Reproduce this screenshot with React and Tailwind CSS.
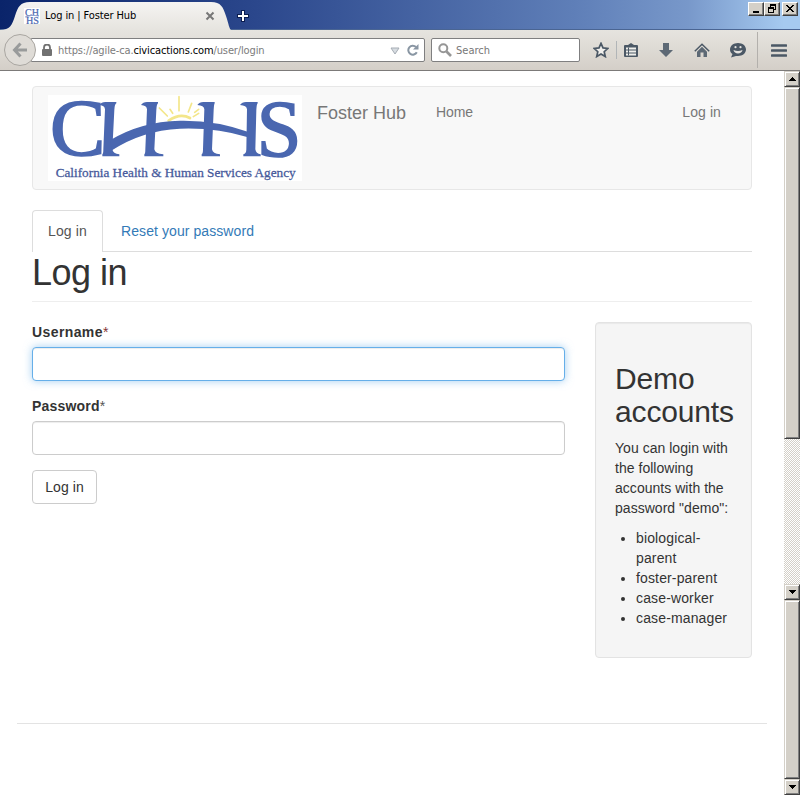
import React from "react";

const TAHOMA = "font-['DejaVu_Sans_Condensed','DejaVu_Sans',sans-serif]";

function Logo() {
  const pillars = [
    [208, 259, 239, 233, 217, 268],
    [333, 384, 365, 359, 343, 400],
    [502, 554, 537, 532, 515, 570],
    [630, 683, 665, 662, 640, 692],
  ];
  return (
    <svg width="254" height="86" viewBox="54 45 762 258" className="block overflow-visible bg-white" aria-label="CHHS">
      <g stroke="#f3e68a" fill="none" strokeLinecap="round">
        <path d="M388 84l24 24M420 88l8 12M447 50v42M485 70l-10 26M506 88l-12 9M506 100l-16 10" strokeWidth="5" />
        <path d="M416 122q34-24 64-8" strokeWidth="8" />
      </g>
      <g fill="#4a67b0" stroke="#4a67b0" strokeWidth="5" fontFamily="'Liberation Serif', serif">
        <text x="60" y="226" fontSize="240" textLength="166" lengthAdjust="spacingAndGlyphs">C</text>
        <text x="680" y="227" fontSize="240" textLength="134" lengthAdjust="spacingAndGlyphs">S</text>
      </g>
      <g fill="#4a67b0">
        {pillars.map(([a, b, t, m, c, d]) => (
          <path
            key={a}
            d={`M${a} 75Q${a + 6} 66 ${a + 18} 66H${b}V70Q${t + 15} 72 ${t + 14} 90L${m + 14} 208Q${m + 16} 221 ${d} 223V229H${c}V223Q${m - 13} 221 ${m - 13} 208L${t - 14} 88Q${t - 15} 76 ${a} 75Z`}
          />
        ))}
        <path d="M240 181Q330 125 450 122Q560 120 658 157L654 172Q560 142 450 146Q335 152 246 211Z" />
      </g>
      <text x="77" y="290" fontSize="39" fill="#46599b" stroke="#46599b" strokeWidth="0.8" fontFamily="'Liberation Serif', serif" textLength="720" lengthAdjust="spacingAndGlyphs">
        California Health &amp; Human Services Agency
      </text>
    </svg>
  );
}

function WinButton({ children, className = "" }) {
  return (
    <div className={"flex h-[14px] w-4 items-center justify-center border border-t-white border-l-white border-r-[#404040] border-b-[#404040] bg-[#d4d0c8] shadow-[inset_-1px_-1px_0_#808080] " + className}>
      <svg width="12" height="10" viewBox="0 0 12 10" shapeRendering="crispEdges">{children}</svg>
    </div>
  );
}

function TitleBar() {
  return (
    <div className="flex h-[30px] items-start justify-between border-b border-[#4a6593] bg-[linear-gradient(90deg,#0a246a_0%,#2b478c_32%,#5f7fb8_72%,#7898ca_86%,#a6caf0_98%)]">
      <div className="flex">
        <div className="grid h-[30px] w-[231px]">
          <svg width="231" height="30" className="col-start-1 row-start-1">
            <defs>
              <linearGradient id="tab" x1="0" y1="0" x2="0" y2="1">
                <stop offset="0" stopColor="#f5f4f2" />
                <stop offset="1" stopColor="#e6e4df" />
              </linearGradient>
            </defs>
            <path d="M0 30C10 30 12 25 15 16S20 2 30 2H211C221 2 223 7 226 16S229 28 231 30Z" fill="url(#tab)" />
          </svg>
          <div className={"col-start-1 row-start-1 flex h-8 items-center pl-6 text-[11px] text-black " + TAHOMA}>
            <svg width="16" height="16" viewBox="0 0 16 16" className="overflow-visible bg-white">
              <g fill="#4a67b0" stroke="#4a67b0" strokeWidth="0.2" fontFamily="'Liberation Serif', serif" fontSize="10">
                <text x="1" y="7.500" textLength="14" lengthAdjust="spacingAndGlyphs">CH</text>
                <text x="2" y="15.500" textLength="13" lengthAdjust="spacingAndGlyphs">HS</text>
              </g>
              <path d="M1 9q7-3 14-1" stroke="#8ea2cf" fill="none" />
            </svg>
            <span className="ml-[5px] w-[150px] whitespace-nowrap tracking-[-0.1px]">Log in | Foster Hub</span>
            <svg width="10" height="10" viewBox="0 0 10 10" className="ml-[10px]">
              <path d="M1.500 1.500l7 7M8.500 1.500l-7 7" stroke="#777" strokeWidth="2" />
            </svg>
          </div>
        </div>
        <svg width="12" height="12" viewBox="0 0 12 12" className="mt-[10px] ml-[6px]">
          <path d="M6 0v12M0 6h12" stroke="#0a1c50" strokeWidth="4" />
          <path d="M6 1v10M1 6h10" stroke="#fff" strokeWidth="2" />
        </svg>
      </div>
      <div className="mt-[2px] mr-[2px] flex">
        <WinButton><path d="M3 7h6v2H3z" /></WinButton>
        <WinButton>
          <path d="M4 0h6v6H8V5h1V2H5v1H4z" />
          <path d="M2 3h6v6H2zM3 5v3h4V5z" fillRule="evenodd" />
        </WinButton>
        <WinButton className="ml-[2px]"><path d="M2 1h2v1h1v1h2V2h1V1h2v1H9v1H8v1H7v1h1v1h1v1h1v1H8V7H7V6H5v1H4v1H2V7h1V6h1V5h1V4H4V3H3V2H2z" /></WinButton>
      </div>
    </div>
  );
}

function Toolbar() {
  return (
    <div className={"flex h-[41px] items-center border-b border-[#7c7a79] bg-[linear-gradient(#e6e4df,#d4cfc8)] text-[11px] " + TAHOMA}>
      <div className="z-10 ml-1 flex h-8 w-8 shrink-0 items-center justify-center rounded-full border border-[#a9a6a1] bg-[#dfdcd7]">
        <svg width="16" height="16" viewBox="0 0 16 16" fill="none" stroke="#999b9b" strokeWidth="3">
          <path d="M8.500 1.500L2.500 8l6 6.500M3 8h12" />
        </svg>
      </div>
      <div className="-ml-[5px] flex h-6 w-[394px] items-center rounded-r-[2px] border border-[#7f7f80] bg-white pl-[10px] text-[#7b7b7b]">
        <svg width="10" height="12" viewBox="0 0 10 12">
          <path d="M2 6V3.500a3 3 0 016 0V6" fill="none" stroke="#717171" strokeWidth="1.8" />
          <rect y="5" width="10" height="7" rx="1" fill="#717171" />
        </svg>
        <span className="mt-[2px] ml-[6px] w-[330px] whitespace-nowrap tracking-[-0.13px]">
          https://agile-ca.<span className="text-black">civicactions.com</span>/user/login
        </span>
        <svg width="10" height="8" viewBox="0 0 10 8" className="mt-[1px] ml-[2px] shrink-0"><path d="M1 1h8L5 7z" fill="#d7dce1" stroke="#a6adb5" /></svg>
        <svg width="12" height="12" viewBox="0 0 12 12" className="ml-[7px] shrink-0">
          <path d="M9.800 8.300a4.500 4.500 0 11-.8-5.300" fill="none" stroke="#8996a3" strokeWidth="2" />
          <path d="M11.500 0v5.500H6z" fill="#8996a3" />
        </svg>
      </div>
      <div className="ml-[6px] flex h-6 w-[149px] shrink-0 items-center rounded-[2px] border border-[#7f7f80] bg-white pl-[6px] text-[#777]">
        <svg width="14" height="14" viewBox="0 0 14 14" fill="none" stroke="#969696">
          <circle cx="5.3" cy="5.3" r="4" strokeWidth="2" />
          <path d="M8.500 8.500l4.500 4.500" strokeWidth="2.6" />
        </svg>
        <span className="mt-[2px] ml-1">Search</span>
      </div>
      <div className="flex h-[38px] grow items-center text-[#4b5865]">
        <svg width="16" height="16" viewBox="0 0 16 16" className="ml-[13px]">
          <path d="M8 1.400l2 4.500 4.900.5-3.700 3.300 1.100 4.900L8 12.100l-4.300 2.500 1.100-4.900L1.100 6.400 6 5.900z" fill="#f0efec" stroke="currentColor" strokeWidth="1.700" />
        </svg>
        <div className="ml-[7px] h-[18px] w-px bg-[#b1b5b7]" />
        <svg width="14" height="14" viewBox="0 0 14 14" className="ml-[7px]">
          <path d="M1 2h3l3-2 3 2h3q1 0 1 1v10q0 1-1 1H1q-1 0-1-1V3q0-1 1-1z" fill="currentColor" />
          <path d="M2 4.500h10v8H2z" fill="#eeeeeb" />
          <path d="M2 7h10M2 10h10M4.500 4.500v8" stroke="currentColor" strokeWidth="1" />
        </svg>
        <svg width="14" height="14" viewBox="0 0 14 14" className="ml-[21px]"><path d="M4 0h6v7h4l-7 7-7-7h4z" fill="#5d6975" /></svg>
        <svg width="16" height="15" viewBox="0 0 16 15" className="ml-[21px]">
          <path d="M.8 8.200L8 1.200l7.200 7" fill="none" stroke="currentColor" strokeWidth="1.500" />
          <path d="M8 3.800l5 5V14H9.500v-4.500h-3V14H3V8.800z" fill="#5d6975" />
        </svg>
        <svg width="16" height="16" viewBox="0 0 16 16" className="ml-5">
          <path d="M8 1c4.500 0 8 2.800 8 6.500S12.500 14 8 14H6L1 15.500l1.500-3.500C1 11 0 9.500 0 7.500 0 3.800 3.500 1 8 1z" fill="currentColor" />
          <path d="M3.500 8q4.500 1.800 9 0c-.5 4.500-8.500 4.500-9 0z" fill="#e4e2de" />
          <circle cx="5.500" cy="5.200" r="1.100" fill="#e4e2de" /><circle cx="10.500" cy="5.200" r="1.100" fill="#e4e2de" />
        </svg>
        <div className="ml-[11px] h-9 w-px bg-[#b3b0ac]" />
        <svg width="16" height="13" viewBox="0 0 16 13" className="ml-[13px]">
          <path d="M1 1.500h14M1 6.500h14M1 11.500h14" stroke="currentColor" strokeWidth="2.600" strokeLinecap="round" />
        </svg>
      </div>
    </div>
  );
}

const BEVEL = "shrink-0 border border-t-[#d4d0c8] border-l-[#d4d0c8] border-r-[#404040] border-b-[#404040] bg-[#d4d0c8] shadow-[inset_1px_1px_0_#fff,inset_-1px_-1px_0_#808080]";

function ArrowButton({ up }) {
  return (
    <div className={"flex h-4 items-center justify-center " + BEVEL}>
      <svg width="7" height="4" viewBox="0 0 7 4" shapeRendering="crispEdges">
        <path d={up ? "M3 0h1v1h1v1h1v1h1v1H0V3h1V2h1V1h1z" : "M0 0h7v1H6v1H5v1H4v1H3V3H2V2H1V1H0z"} />
      </svg>
    </div>
  );
}

function Scrollbars() {
  return (
    <div className="flex w-4 shrink-0 flex-col">
      <ArrowButton up />
      <div className={"h-[352px] " + BEVEL} />
      <div className="h-[145px] shrink-0 bg-[conic-gradient(#fff_25%,#d4d0c8_0_50%,#fff_0_75%,#d4d0c8_0)] bg-[length:2px_2px]" />
      <ArrowButton />
      <div className={"h-[179px] " + BEVEL} />
      <ArrowButton />
    </div>
  );
}

const INPUT = "block h-[34px] w-full rounded border bg-white px-3 outline-none ";

function Page() {
  return (
    <div className="w-[784px] px-[17px] pt-[15px]">
      <div className="px-[15px]">
        <nav className="flex h-[104px] rounded border border-[#e7e7e7] bg-[#f8f8f8] pl-[15px] text-[#777]">
          <div className="mt-2"><Logo /></div>
          <span className="mt-4 ml-[15px] text-[18px] leading-5">Foster Hub</span>
          <span className="mt-[15px] ml-[30px] tracking-[-0.1px]">Home</span>
          <span className="mt-[15px] mr-[30px] ml-auto tracking-[0.1px]">Log in</span>
        </nav>
        <div className="mt-5 flex h-[42px] border-b border-[#ddd]">
          <div className="h-[42px] w-[71px] rounded-t border border-b-0 border-[#ddd] bg-white px-[15px] pt-[10px] tracking-[0.15px] whitespace-nowrap text-[#555]">Log in</div>
          <div className="ml-[18px] pt-[11px] tracking-[0.08px] text-[#337ab7]">Reset your password</div>
        </div>
        <h1 className="h-[50px] border-b border-[#eee] pt-px text-[36px] leading-10 tracking-[-0.5px]">Log in</h1>
        <div className="mt-5 flex justify-between">
          <form className="w-[533px]">
            <label className="block"><b className="tracking-[0.4px]">Username</b><span className="text-[#843534]">*</span></label>
            <input className={INPUT + "mt-[5px] border-[#66afe9] shadow-[inset_0_1px_1px_rgba(0,0,0,0.075),0_0_8px_rgba(102,175,233,0.6)]"} />
            <label className="mt-[15px] block"><b className="tracking-[0.2px]">Password</b><span className="text-[#555]">*</span></label>
            <input type="password" className={INPUT + "mt-[5px] border-[#ccc] shadow-[inset_0_1px_1px_rgba(0,0,0,0.075)]"} />
            <button type="button" className="mt-[15px] h-[34px] w-[65px] rounded border border-[#ccc] bg-white tracking-[0.1px]">Log in</button>
          </form>
          <aside className="h-[336px] w-[157px] rounded border border-[#e3e3e3] bg-[#f5f5f5] px-[19px] pt-[39px] shadow-[inset_0_1px_1px_rgba(0,0,0,0.05)]">
            <h2 className="text-[30px] leading-[33px] tracking-[-0.15px]">Demo<br />accounts</h2>
            <p className="mt-[10px] whitespace-nowrap tracking-[0.03px]">You can login with<br />the following<br />accounts with the<br />password "demo":</p>
            <ul className="mt-[10px] list-disc pl-[21px] tracking-[0.14px]">
              <li>biological-<br />parent</li>
              <li>foster-parent</li>
              <li>case-worker</li>
              <li>case-manager</li>
            </ul>
          </aside>
        </div>
      </div>
      <hr className="mt-[65px] border-[#e3e3e3]" />
    </div>
  );
}

export default function App() {
  return (
    <div className="h-[795px] w-[800px] overflow-hidden bg-white font-['Liberation_Sans',Arial,sans-serif] text-[14px] leading-5 text-[#333]">
      <TitleBar />
      <Toolbar />
      <div className="flex h-[724px]">
        <Page />
        <Scrollbars />
      </div>
    </div>
  );
}
